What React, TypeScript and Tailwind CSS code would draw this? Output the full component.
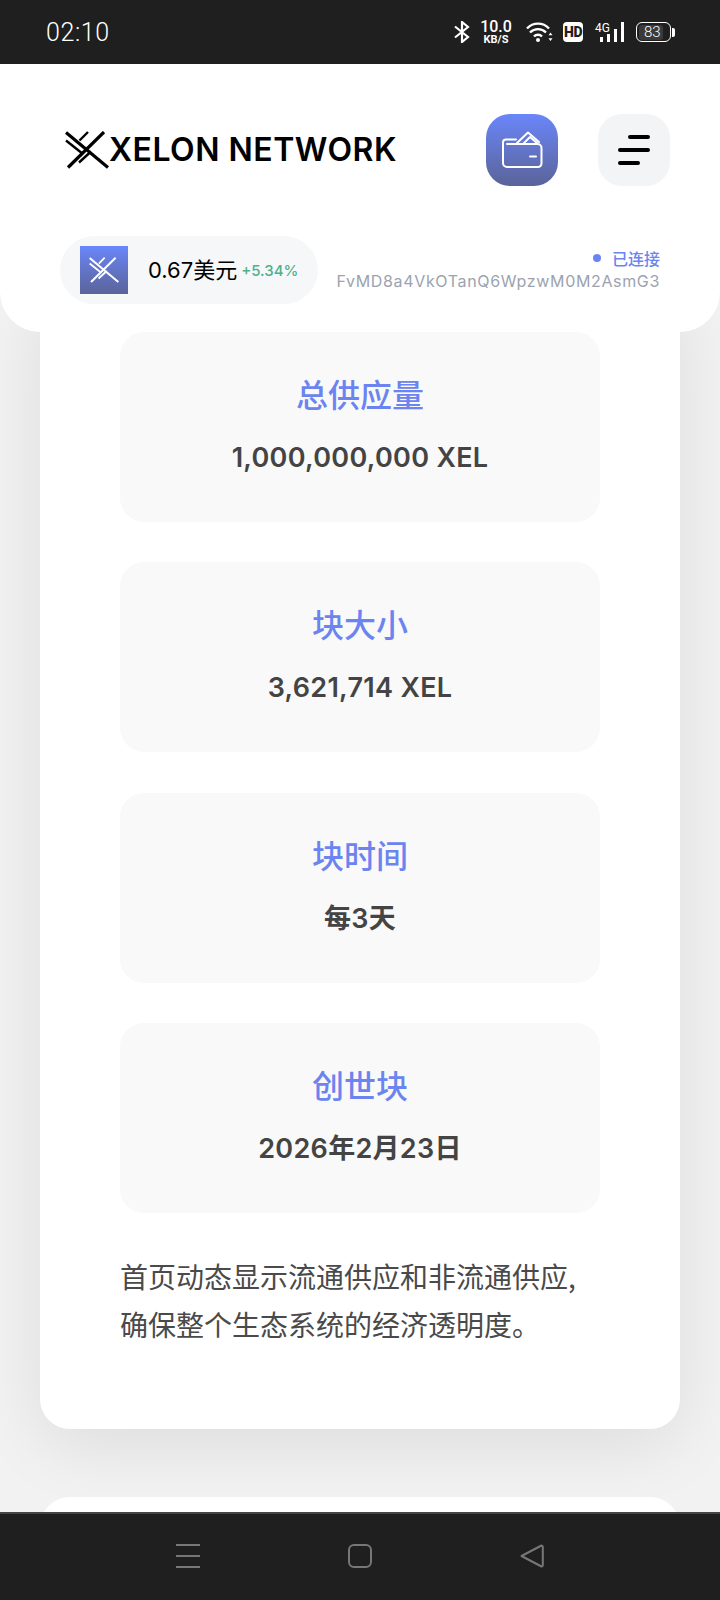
const latin = "font-['Inter','Noto_Sans_CJK_SC',sans-serif]";

// Crossed-blades brand mark: heavy diagonals with thin parallels beside them
function XelonMark({ className, heavy = 3, thin = 1.8 }: { className?: string; heavy?: number; thin?: number }) {
  return (
    <svg viewBox="0 0 44 38" className={className} fill="none" stroke="currentColor" strokeLinecap="butt">
      <path d="M1 1.500L43 36.500" strokeWidth={heavy} />
      <path d="M39 1L3 36.500" strokeWidth={heavy} />
      <path d="M1 9.500L18 23" strokeWidth={thin} />
      <path d="M23 1L14.500 9.500" strokeWidth={thin} />
      <path d="M14 31.500L26 20.500" strokeWidth={thin} />
    </svg>
  );
}

function WalletIcon() {
  return (
    <svg viewBox="0 0 42 42" className="w-[42px] h-[42px]" fill="none" stroke="white" strokeWidth="2" strokeLinecap="round" strokeLinejoin="round">
      <path d="M15 10.500H5a3 3 0 0 0-3 3V34a4 4 0 0 0 4 4h31a3.500 3.500 0 0 0 3.500-3.500V19a4 4 0 0 0-4-4H6" />
      <path d="M16 14L27 3.500 38 13" />
      <path d="M23 14l6-6 7 6" />
      <path d="M29 27.500h6" />
    </svg>
  );
}

function StatusBar() {
  return (
    <div className="h-16 shrink-0 bg-[#1f1f1f] text-white flex items-center pl-[46px] pr-[45px]">
      <span className="text-[25px] leading-none font-['Roboto',sans-serif] font-light tracking-[0.6px]">02:10</span>
      <div className="ml-auto flex items-center font-['Roboto',sans-serif]">
        <svg viewBox="0 0 16 22" className="w-[16px] h-[22px]" fill="none" stroke="white" strokeWidth="2.200">
          <path d="M1 5.500l13 10.500-6 5V1l6 5L1 16.500" />
        </svg>
        <div className="ml-[10px] w-[32px] flex flex-col items-center leading-none font-medium">
          <span className="text-[16px] leading-[15px]">10.0</span>
          <span className="text-[11px] leading-[11px] font-bold">KB/S</span>
        </div>
        <svg viewBox="0 0 27 20" className="ml-[14px] w-[27px] h-[20px]" fill="none" stroke="white" strokeWidth="2.400">
          <path d="M1 6.500c6-6.500 16-6.500 22 0" />
          <path d="M4 10.500c4.500-4.500 11.500-4.500 16 0" />
          <path d="M8 14.500c2.200-2.400 5.800-2.400 8 0" />
          <circle cx="12" cy="18" r="2" fill="white" stroke="none" />
          <path d="M24.500 10.500l-2 2.700h4zM24.500 19l-2-2.700h4z" fill="white" stroke="none" />
        </svg>
        <span className="ml-[10px] w-[20px] h-[20px] bg-white rounded-[4px] text-[#1f1f1f] text-[14px] font-black flex items-center justify-center leading-none tracking-[-0.5px]">HD</span>
        <div className="ml-[12px] w-[29px] h-[20px] relative">
          <span className="text-[12px] leading-none absolute left-0 top-0">4G</span>
          <div className="absolute inset-0 flex items-end justify-end gap-[4px]">
            <div className="w-[3px] h-[5px] bg-white" />
            <div className="w-[3px] h-[8px] bg-white" />
            <div className="w-[3px] h-[13px] bg-white" />
            <div className="w-[3px] h-[20px] bg-white" />
          </div>
        </div>
        <div className="ml-[12px] flex items-center">
          <div className="w-[35px] h-[20px] rounded-[6px] border-[1.500px] border-white p-[1.500px] flex">
            <div className="w-[82%] h-full rounded-[3px] bg-[#3a3a3a] flex items-center justify-center text-[15px] leading-none font-light pl-[3px]">83</div>
          </div>
          <div className="w-[3px] h-[9px] bg-white ml-[1px] rounded-r-[2px]" />
        </div>
      </div>
    </div>
  );
}

function Header() {
  return (
    <header className="relative z-10 h-[268px] shrink-0 bg-white rounded-b-[40px] pl-[60px] pr-[50px] pt-[50px]">
      <div className="flex items-center h-[72px]">
        <div className="flex items-center text-black pl-[5px]">
          <XelonMark className="w-[44px] h-[38px]" heavy={3.200} thin={2.400} />
          <span className={`text-[32px] leading-none font-semibold tracking-[0.5px] ${latin}`}>XELON NETWORK</span>
        </div>
        <button className="ml-auto w-[72px] h-[72px] rounded-[24px] bg-gradient-to-b from-[#6a86fa] to-[#5a6399] flex items-center justify-center">
          <WalletIcon />
        </button>
        <button className="ml-[40px] w-[72px] h-[72px] rounded-[24px] bg-[#f3f4f6] flex flex-col items-center justify-center gap-[9px]">
          <div className="w-[22px] h-[4px] rounded-full bg-black ml-[10px]" />
          <div className="w-[32px] h-[4px] rounded-full bg-black" />
          <div className="w-[22px] h-[4px] rounded-full bg-black mr-[10px]" />
        </button>
      </div>
      <div className="mt-[50px] mr-[10px] flex items-center justify-between">
        <div className="w-[258px] h-[68px] rounded-full bg-[#f5f7f9] flex items-center pl-[20px]">
          <div className="w-12 h-12 bg-gradient-to-b from-[#6a86fa] to-[#5a6399] text-white flex items-center justify-center">
            <XelonMark className="w-[30px] h-[26px]" heavy={3} thin={2.600} />
          </div>
          <span className={`ml-[20px] text-[22px] leading-none text-black ${latin}`}>0.67美元</span>
          <span className={`ml-[4px] text-[15px] leading-none font-medium text-[#4fb08c] ${latin}`}>+5.34%</span>
        </div>
        <div className="flex flex-col items-end mt-[-1px]">
          <div className="flex items-center gap-[11px]">
            <span className="w-2 h-2 rounded-full bg-[#6a84f5]" />
            <span className="text-[16px] leading-[22px] font-medium text-[#6a84f0] font-['Noto_Sans_CJK_SC',sans-serif]">已连接</span>
          </div>
          <span className={`text-[16px] leading-[24px] text-[#9ca3af] tracking-[0.65px] ${latin}`}>FvMD8a4VkOTanQ6WpzwM0M2AsmG3</span>
        </div>
      </div>
    </header>
  );
}

function Tile({ title, value }: { title: string; value: string }) {
  return (
    <div className="h-[190px] rounded-[24px] bg-[#f9f9f9] flex flex-col items-center pt-[37px]">
      <h3 className="text-[32px] leading-[48px] font-medium text-[#6b84f0] font-['Noto_Sans_CJK_SC',sans-serif]">{title}</h3>
      <p className={`mt-[24px] text-[27px] leading-[34px] font-semibold text-[#444444] tracking-[0.3px] ${latin}`}>{value}</p>
    </div>
  );
}

const stats = [
  { title: "总供应量", value: "1,000,000,000 XEL" },
  { title: "块大小", value: "3,621,714 XEL" },
  { title: "块时间", value: "每3天" },
  { title: "创世块", value: "2026年2月23日" },
];

function BottomNav() {
  return (
    <nav className="relative z-10 h-[88px] shrink-0 bg-[#1f1f1f] border-t-2 border-[#444444] flex items-start pt-[30px]">
      <div className="ml-[176px] w-6 h-6 flex flex-col justify-between">
        <div className="h-[2px] bg-[#777777]" />
        <div className="h-[2px] bg-[#777777]" />
        <div className="h-[2px] bg-[#777777]" />
      </div>
      <div className="ml-[148px] w-6 h-6 rounded-[6px] border-2 border-[#777777]" />
      <svg viewBox="0 0 24 24" className="ml-[148px] w-6 h-6" fill="none" stroke="#777777" strokeWidth="2" strokeLinejoin="round">
        <path d="M1.500 12L21.500 1.500c1 0 1.300.5 1.300 1.500v18c0 1-.3 1.500-1.300 1.500z" />
      </svg>
    </nav>
  );
}

export default function App() {
  return (
    <div className="w-[720px] h-[1600px] flex flex-col overflow-hidden bg-[#f2f2f2]">
      <StatusBar />
      <Header />
      <main className="flex-1 min-h-0 -mt-[40px] overflow-hidden px-10">
        <section className="h-[1137px] bg-white rounded-b-[30px] shadow-[0_16px_70px_rgba(0,0,0,0.09)] px-20 pt-[40px]">
          <div className="flex flex-col gap-[40.250px]">
            {stats.map((s) => (
              <Tile key={s.title} title={s.title} value={s.value} />
            ))}
          </div>
          <p className="mt-[39px] text-[28px] leading-[48px] text-[#4a4a4a] font-['Noto_Sans_CJK_SC',sans-serif]">
            首页动态显示流通供应和非流通供应,
            <br />
            确保整个生态系统的经济透明度。
          </p>
        </section>
        <section className="mt-[68px] h-[200px] bg-white rounded-t-[30px]" />
      </main>
      <BottomNav />
    </div>
  );
}
